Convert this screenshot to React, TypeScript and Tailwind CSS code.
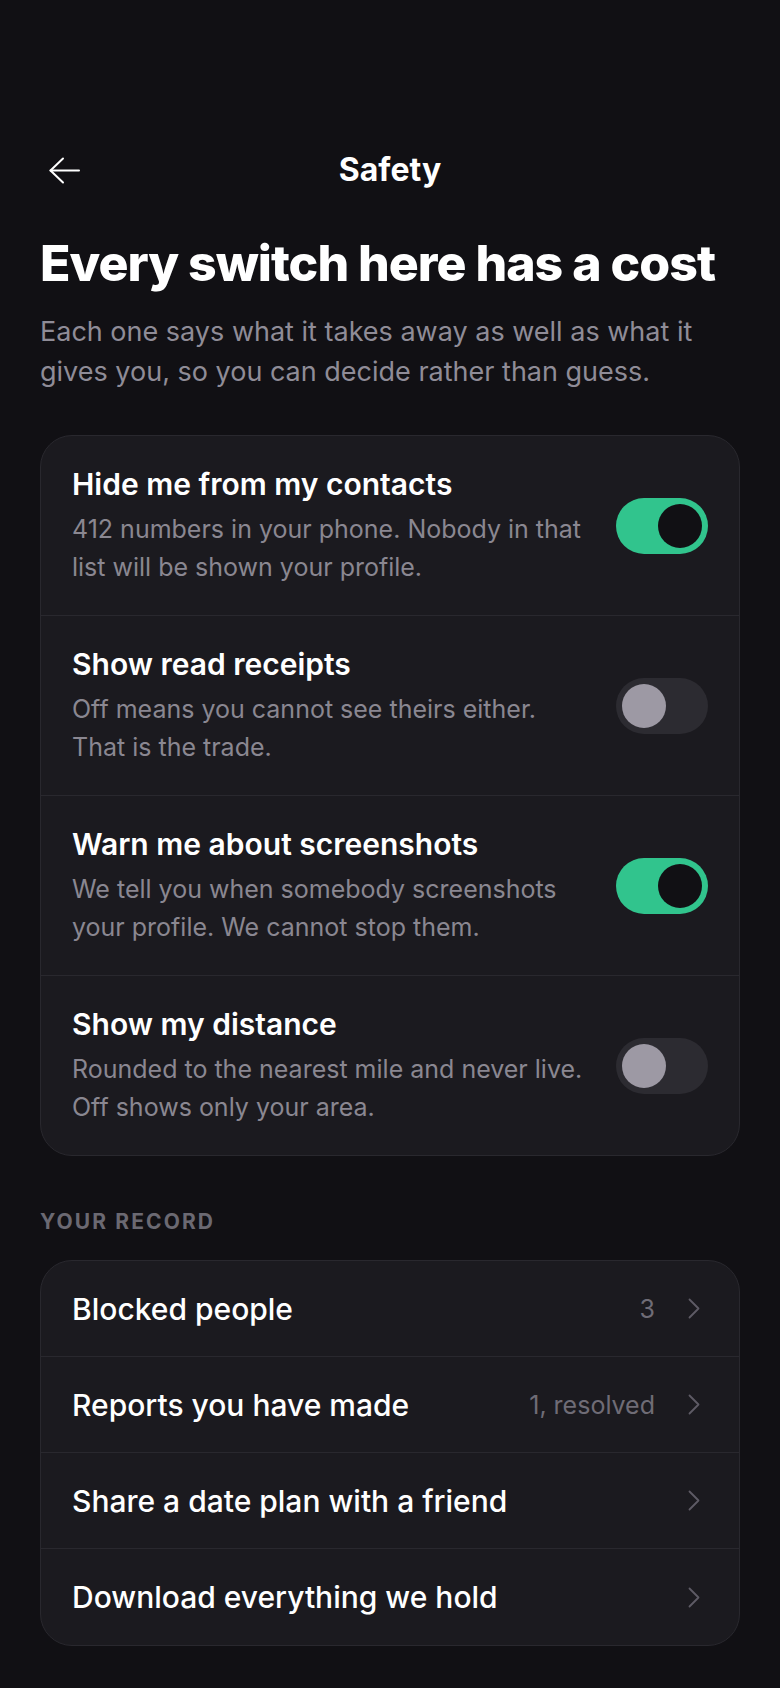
import React from 'react';

type Setting = { title: string; desc: string; on: boolean };

const SETTINGS: Setting[] = [
  { title: 'Hide me from my contacts', desc: '412 numbers in your phone. Nobody in that list will be shown your profile.', on: true },
  { title: 'Show read receipts', desc: 'Off means you cannot see theirs either. That is the trade.', on: false },
  { title: 'Warn me about screenshots', desc: 'We tell you when somebody screenshots your profile. We cannot stop them.', on: true },
  { title: 'Show my distance', desc: 'Rounded to the nearest mile and never live. Off shows only your area.', on: false },
];

const RECORD = [
  { label: 'Blocked people', value: '3' },
  { label: 'Reports you have made', value: '1, resolved' },
  { label: 'Share a date plan with a friend', value: '' },
  { label: 'Download everything we hold', value: '' },
];

function Toggle({ on }: { on: boolean }) {
  return (
    <div
      className={`w-[92px] h-[56px] shrink-0 rounded-full p-[6px] flex ${
        on ? 'bg-[#31c48d] justify-end' : 'bg-[#2c2b31] justify-start'
      }`}
    >
      <span className={`w-[44px] h-[44px] rounded-full ${on ? 'bg-[#111014]' : 'bg-[#9d99a4]'}`} />
    </div>
  );
}

export default function App() {
  return (
    <div className="min-h-screen bg-[#111014] font-['Inter',sans-serif] text-white">
      <div className="px-[40px] pt-[142px] pb-[45px]">
        {/* Nav */}
        <div className="grid grid-cols-[60px_1fr_60px] items-center h-[56px]">
          <div className="pl-[9px] flex items-center">
            <svg width="31" height="27" viewBox="0 0 31 27" fill="none" stroke="#ffffff" strokeWidth="2" strokeLinecap="round" strokeLinejoin="round">
              <path d="M30 13.5H1.5" />
              <path d="M14 1.5L1.5 13.5L14 25.5" />
            </svg>
          </div>
          <div className="text-center text-[32px] leading-[40px] font-bold">Safety</div>
          <div />
        </div>

        {/* Heading */}
        <h1 className="mt-[38px] text-[50px] leading-[55px] font-extrabold tracking-[-0.02em]">
          Every switch here has a cost
        </h1>
        <p className="mt-[21px] text-[27px] leading-[40px] text-[#8f8c97]">
          Each one says what it takes away as well as what it gives you, so you can decide rather than guess.
        </p>

        {/* Toggles */}
        <div className="mt-[43px] rounded-[32px] border border-[#29282e] bg-[#1b1a1f] overflow-hidden divide-y divide-[#29282e]">
          {SETTINGS.map((s) => (
            <div key={s.title} className="flex items-center gap-[26px] px-[31px] pt-[30px] pb-[29px]">
              <div className="flex-1 min-w-0">
                <div className="text-[30px] leading-[36px] font-semibold">{s.title}</div>
                <div className="mt-[9px] text-[25px] leading-[37.5px] text-[#8a8791]">{s.desc}</div>
              </div>
              <Toggle on={s.on} />
            </div>
          ))}
        </div>

        {/* Record */}
        <div className="mt-[54px] text-[21px] leading-[24px] font-bold tracking-[0.1em] text-[#6b6972]">
          YOUR RECORD
        </div>
        <div className="mt-[26px] rounded-[32px] border border-[#29282e] bg-[#1b1a1f] overflow-hidden divide-y divide-[#29282e]">
          {RECORD.map((r) => (
            <div key={r.label} className="flex items-center justify-between px-[31px] h-[96px]">
              <span className="text-[30px] leading-[36px] font-medium">{r.label}</span>
              <div className="flex items-center">
                {r.value && <span className="text-[25px] leading-[30px] text-[#6f6c76]">{r.value}</span>}
                <svg className="ml-[33px] mr-[8px]" width="12" height="21" viewBox="0 0 12 21" fill="none" stroke="#5e5b65" strokeWidth="1.8" strokeLinecap="round" strokeLinejoin="round">
                  <path d="M1.5 1.5L10.5 10.5L1.5 19.5" />
                </svg>
              </div>
            </div>
          ))}
        </div>
      </div>
    </div>
  );
}
